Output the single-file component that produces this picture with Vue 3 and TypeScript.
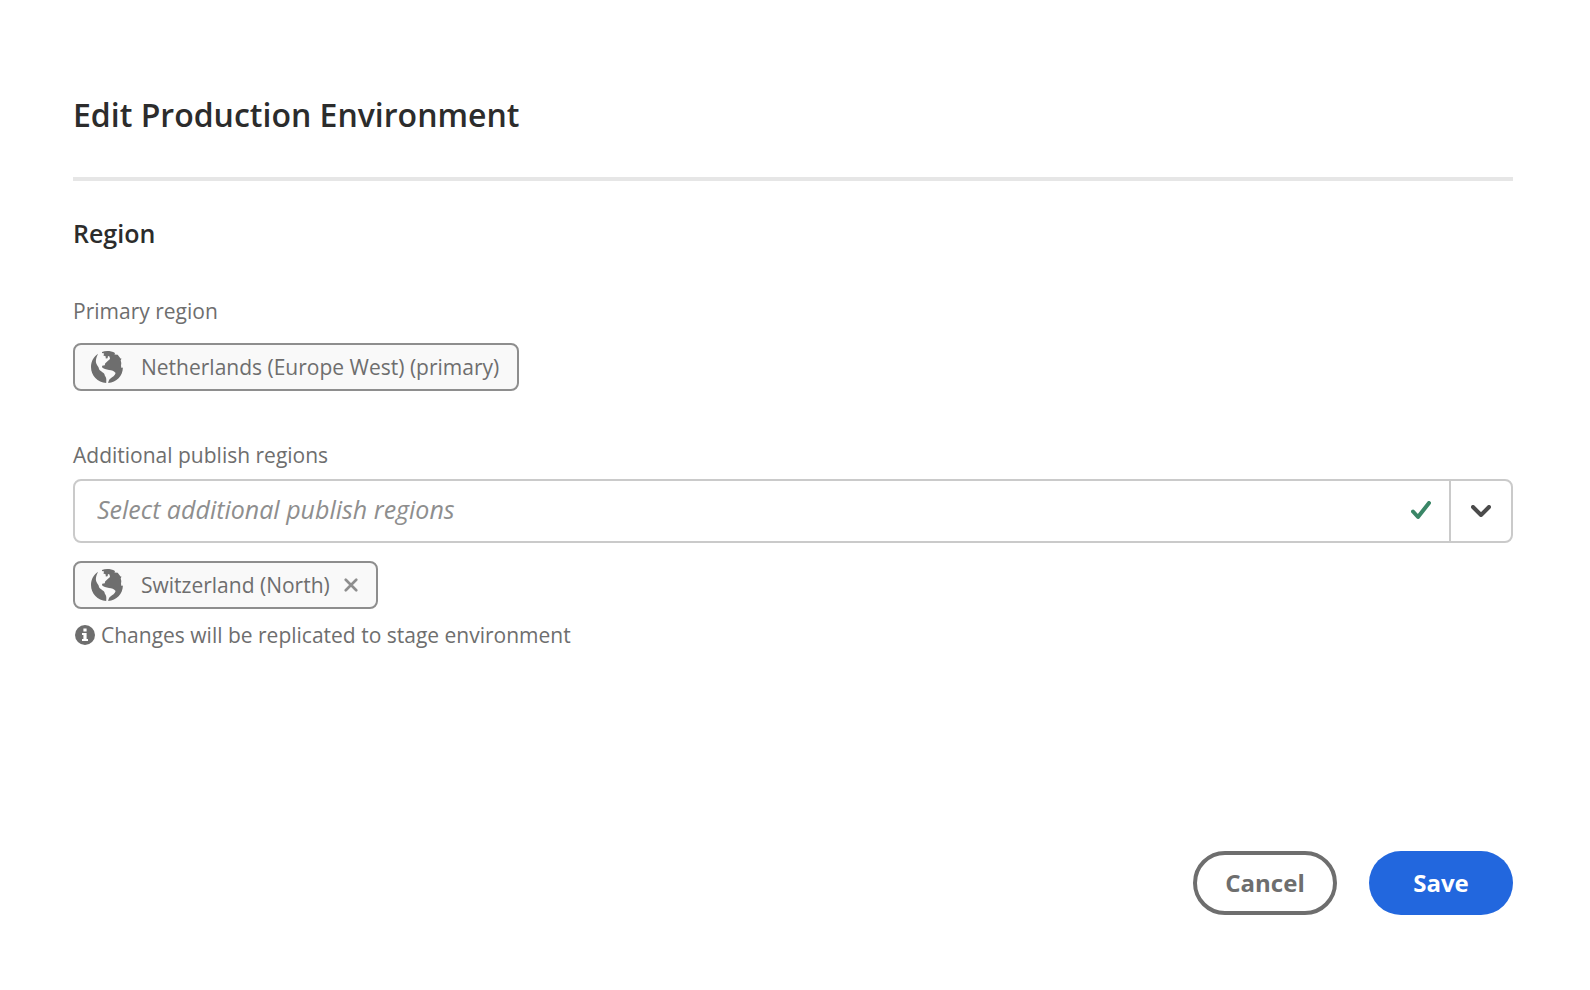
<script setup lang="ts">
import { ref } from 'vue'

const primaryRegion = 'Netherlands (Europe West) (primary)'
const query = ref('')
const publishRegions = ref<string[]>(['Switzerland (North)'])

function removeRegion(name: string) {
  publishRegions.value = publishRegions.value.filter((region) => region !== name)
}
</script>

<template>
  <svg class="sprite" aria-hidden="true">
    <symbol id="globe" viewBox="0 0 32 32">
      <path d="M7 2.800C2.800 5.600 0 10.400 0 16c0 8.600 6.600 15.600 15.200 16 .1-2 .3-3.600-.2-5.200-.5-1.600-1.500-2.200-1.600-3.800-.9-1.400-3-2.200-4.300-3.400-1.300-1.300-1-2.800-2.100-4.200C5.600 13.200 4.600 11.600 4.900 9.400 5.200 7 6.200 4.700 7 2.800z" />
      <path d="M11 .9C14.500-.3 20-.4 24 2.100l-.5 1.300 3.200.4L29.500 7.500l1-.1-.8 2.200.6 2.300-.3 3 .5 2.200 1.400-.5C31.800 25 25.500 31.500 17.200 32c.2-2 .9-3.600 2.300-4.600 2-1.400 4.500-2.600 5.100-5.400-1.400-2.200-3.800-2.700-6.600-3.100-2.700-.4-5.600-.9-7-2.600l.2-1.500 2.600-.6.300-1.800 2.900-2.600L19 8l-.5-2.400-1.500-.6-.4 2.300-1.800.3-.2-2.400-2.200-.6.800-2.200L11 1.900z" />
    </symbol>
  </svg>

  <form class="dialog" @submit.prevent>
    <h1>Edit Production Environment</h1>
    <hr />
    <h2>Region</h2>

    <section class="primary" aria-labelledby="primary-label">
      <p id="primary-label">Primary region</p>
      <div class="tag">
        <svg class="globe" aria-hidden="true"><use href="#globe" /></svg>
        <span>{{ primaryRegion }}</span>
      </div>
    </section>

    <section class="additional">
      <label for="regions">Additional publish regions</label>
      <div class="combo">
        <input id="regions" v-model="query" type="text" placeholder="Select additional publish regions" />
        <svg class="check" viewBox="0 0 20 20" aria-hidden="true"><path d="M2 10.500 7 16 18 2" /></svg>
        <button class="toggle" type="button" aria-label="Show regions">
          <svg viewBox="0 0 20 12" aria-hidden="true"><path d="m2 2 8 8 8-8" /></svg>
        </button>
      </div>
      <div v-for="region in publishRegions" :key="region" class="tag">
        <svg class="globe" aria-hidden="true"><use href="#globe" /></svg>
        <span>{{ region }}</span>
        <button class="remove" type="button" :aria-label="`Remove ${region}`" @click="removeRegion(region)">
          <svg viewBox="0 0 16 16" aria-hidden="true"><path d="m2 2 12 12M14 2 2 14" /></svg>
        </button>
      </div>
      <p class="hint">
        <svg viewBox="0 0 20 20" aria-hidden="true">
          <circle cx="10" cy="10" r="10" />
          <path d="M8.400 3.500h3.200v3H8.400zM7 8h4.600v6H13v2H7v-2h1.400v-4H7z" />
        </svg>
        <span>Changes will be replicated to stage environment</span>
      </p>
    </section>

    <footer>
      <button class="action cancel" type="button">Cancel</button>
      <button class="action save" type="submit">Save</button>
    </footer>
  </form>
</template>

<style>
body {
  margin: 0;
  background: #fff;
}
</style>

<style scoped>
.sprite {
  position: absolute;
  width: 0;
  height: 0;
}

.dialog {
  box-sizing: border-box;
  display: flex;
  flex-direction: column;
  min-height: 100vh;
  padding: 95px 77px 75px 73px;
  color: #6e6e6e;
  font-family: "Open Sans", "Noto Sans", sans-serif;
  font-size: 21px;
  line-height: 28px;
}

h1,
h2,
p {
  margin: 0;
}

h1 {
  color: #2c2c2c;
  font-size: 32px;
  font-weight: 600;
  line-height: 40px;
}

hr {
  width: 100%;
  height: 4px;
  margin: 42px 0 36px;
  border: 0;
  background: #e6e6e6;
}

h2 {
  color: #2c2c2c;
  font-size: 25px;
  font-weight: 600;
  line-height: 32px;
}

section {
  display: flex;
  flex-direction: column;
  align-items: flex-start;
}

.primary {
  gap: 18px;
  margin-top: 48px;
}

.additional {
  margin-top: 50px;
}

.tag {
  box-sizing: border-box;
  display: flex;
  align-items: center;
  height: 48px;
  padding: 0 18px 0 16px;
  border: 2px solid #8e8e8e;
  border-radius: 8px;
  background: #f9f9f9;
}

.globe {
  width: 32px;
  height: 32px;
  margin-right: 18px;
  fill: #6e6e6e;
}

.combo {
  box-sizing: border-box;
  display: flex;
  align-items: center;
  align-self: stretch;
  height: 64px;
  margin: 10px 0 18px;
  border: 2px solid #cacaca;
  border-radius: 8px;
}

input {
  box-sizing: border-box;
  flex: 1;
  min-width: 0;
  height: 100%;
  padding: 0 22px 4px;
  border: 0;
  outline: 0;
  background: none;
  color: #2c2c2c;
  font: inherit;
  font-size: 25px;
}

input::placeholder {
  color: #8e8e8e;
  font-style: italic;
  opacity: 1;
}

button {
  padding: 0;
  border: 0;
  background: none;
  font: inherit;
  cursor: pointer;
}

button svg {
  display: block;
}

.check,
.toggle svg,
.remove svg {
  fill: none;
  stroke-width: 4px;
  stroke-linecap: round;
  stroke-linejoin: round;
}

.check {
  width: 20px;
  height: 20px;
  margin-right: 18px;
  stroke: #3a8667;
}

.toggle {
  display: grid;
  place-items: center;
  width: 62px;
  height: 100%;
  border-left: 2px solid #cacaca;
}

.toggle svg {
  width: 20px;
  height: 12px;
  stroke: #4b4b4b;
}

.remove {
  margin-left: 14px;
}

.remove svg {
  width: 14px;
  height: 14px;
  stroke: #8e8e8e;
  stroke-width: 3px;
}

.hint {
  display: flex;
  align-items: center;
  gap: 6px;
  margin: 12px 0 0 2px;
}

.hint svg {
  width: 20px;
  height: 20px;
  fill: #6e6e6e;
}

.hint path {
  fill: #fff;
}

footer {
  display: flex;
  justify-content: flex-end;
  gap: 32px;
  margin-top: auto;
}

.action {
  box-sizing: border-box;
  width: 144px;
  height: 64px;
  border-radius: 32px;
  font-size: 24px;
  font-weight: 700;
}

.cancel {
  border: 4px solid #6e6e6e;
  color: #6e6e6e;
}

.save {
  background: #2267de;
  color: #fff;
}
</style>
